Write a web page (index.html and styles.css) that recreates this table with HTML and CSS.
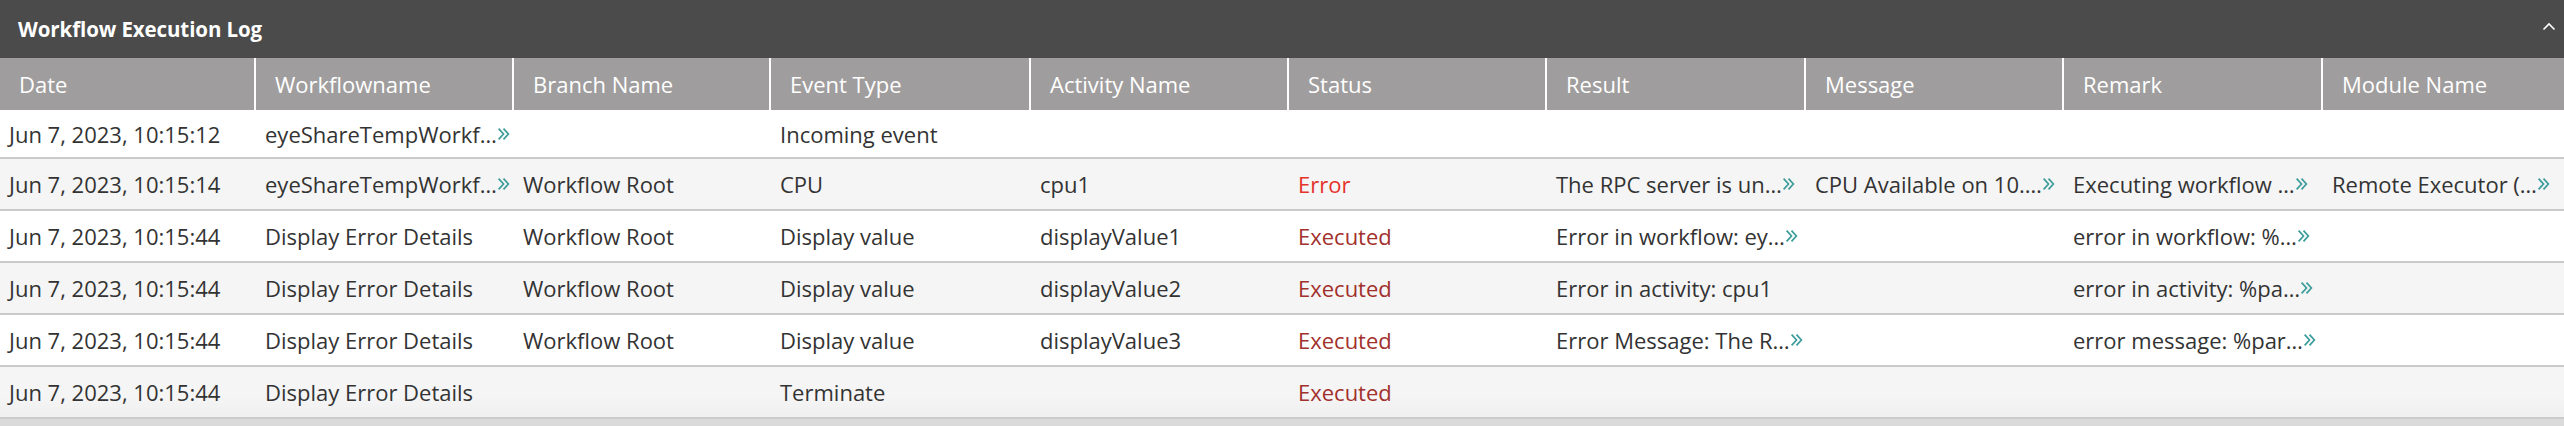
FILE: index.html
```html
<!DOCTYPE html>
<html>
<head>
<meta charset="utf-8">
<link rel="stylesheet" href="styles.css">
</head>
<body>
<div class="panel">
  <div class="titlebar">
    <span class="title">Workflow Execution Log</span>
    <svg class="collapse" width="14" height="9" viewBox="0 0 14 9"><polyline points="1.5,7.5 7,2 12.5,7.5" fill="none" stroke="#fff" stroke-width="1.6"/></svg>
  </div>
  <div class="tablewrap">
    <div class="grid">
      <div class="row head">
        <div class="th">Date</div>
        <div class="th">Workflowname</div>
        <div class="th">Branch Name</div>
        <div class="th">Event Type</div>
        <div class="th">Activity Name</div>
        <div class="th">Status</div>
        <div class="th">Result</div>
        <div class="th">Message</div>
        <div class="th">Remark</div>
        <div class="th">Module Name</div>
      </div>

      <div class="row first">
        <div class="td">Jun 7, 2023, 10:15:12</div>
        <div class="td">eyeShareTempWorkf…<svg class="more" viewBox="0 0 12 14"><polyline points="1.5,2 6,7 1.5,12"/><polyline points="6,2 10.5,7 6,12"/></svg></div>
        <div class="td"></div>
        <div class="td">Incoming event</div>
        <div class="td"></div>
        <div class="td"></div>
        <div class="td"></div>
        <div class="td"></div>
        <div class="td"></div>
        <div class="td"></div>
      </div>

      <div class="row alt">
        <div class="td">Jun 7, 2023, 10:15:14</div>
        <div class="td">eyeShareTempWorkf…<svg class="more" viewBox="0 0 12 14"><polyline points="1.5,2 6,7 1.5,12"/><polyline points="6,2 10.5,7 6,12"/></svg></div>
        <div class="td">Workflow Root</div>
        <div class="td">CPU</div>
        <div class="td">cpu1</div>
        <div class="td error">Error</div>
        <div class="td">The RPC server is un…<svg class="more" viewBox="0 0 12 14"><polyline points="1.5,2 6,7 1.5,12"/><polyline points="6,2 10.5,7 6,12"/></svg></div>
        <div class="td">CPU Available on 10.…<svg class="more" viewBox="0 0 12 14"><polyline points="1.5,2 6,7 1.5,12"/><polyline points="6,2 10.5,7 6,12"/></svg></div>
        <div class="td">Executing workflow … <svg class="more" viewBox="0 0 12 14"><polyline points="1.5,2 6,7 1.5,12"/><polyline points="6,2 10.5,7 6,12"/></svg></div>
        <div class="td">Remote Executor (…<svg class="more" viewBox="0 0 12 14"><polyline points="1.5,2 6,7 1.5,12"/><polyline points="6,2 10.5,7 6,12"/></svg></div>
      </div>

      <div class="row">
        <div class="td">Jun 7, 2023, 10:15:44</div>
        <div class="td">Display Error Details</div>
        <div class="td">Workflow Root</div>
        <div class="td">Display value</div>
        <div class="td">displayValue1</div>
        <div class="td executed">Executed</div>
        <div class="td">Error in workflow: ey…<svg class="more" viewBox="0 0 12 14"><polyline points="1.5,2 6,7 1.5,12"/><polyline points="6,2 10.5,7 6,12"/></svg></div>
        <div class="td"></div>
        <div class="td">error in workflow: %… <svg class="more" viewBox="0 0 12 14"><polyline points="1.5,2 6,7 1.5,12"/><polyline points="6,2 10.5,7 6,12"/></svg></div>
        <div class="td"></div>
      </div>

      <div class="row alt">
        <div class="td">Jun 7, 2023, 10:15:44</div>
        <div class="td">Display Error Details</div>
        <div class="td">Workflow Root</div>
        <div class="td">Display value</div>
        <div class="td">displayValue2</div>
        <div class="td executed">Executed</div>
        <div class="td">Error in activity: cpu1</div>
        <div class="td"></div>
        <div class="td">error in activity: %pa…<svg class="more" viewBox="0 0 12 14"><polyline points="1.5,2 6,7 1.5,12"/><polyline points="6,2 10.5,7 6,12"/></svg></div>
        <div class="td"></div>
      </div>

      <div class="row">
        <div class="td">Jun 7, 2023, 10:15:44</div>
        <div class="td">Display Error Details</div>
        <div class="td">Workflow Root</div>
        <div class="td">Display value</div>
        <div class="td">displayValue3</div>
        <div class="td executed">Executed</div>
        <div class="td">Error Message: The R…<svg class="more" viewBox="0 0 12 14"><polyline points="1.5,2 6,7 1.5,12"/><polyline points="6,2 10.5,7 6,12"/></svg></div>
        <div class="td"></div>
        <div class="td">error message: %par…<svg class="more" viewBox="0 0 12 14"><polyline points="1.5,2 6,7 1.5,12"/><polyline points="6,2 10.5,7 6,12"/></svg></div>
        <div class="td"></div>
      </div>

      <div class="row alt last">
        <div class="td">Jun 7, 2023, 10:15:44</div>
        <div class="td">Display Error Details</div>
        <div class="td"></div>
        <div class="td">Terminate</div>
        <div class="td"></div>
        <div class="td executed">Executed</div>
        <div class="td"></div>
        <div class="td"></div>
        <div class="td"></div>
        <div class="td"></div>
      </div>
    </div>
  </div>
  <div class="hscroll"></div>
</div>
</body>
</html>
```

FILE: styles.css
```css
html, body {
  margin: 0;
  padding: 0;
  background: #ffffff;
}

body {
  font-family: "Open Sans", "Noto Sans", "Liberation Sans", sans-serif;
  color: #333333;
  overflow: hidden;
}

.panel {
  width: 2564px;
  height: 426px;
  display: flex;
  flex-direction: column;
  overflow: hidden;
}

.titlebar {
  height: 58px;
  background: #4b4b4b;
  display: flex;
  align-items: center;
  justify-content: space-between;
  padding: 0 8px 0 18px;
  flex-shrink: 0;
}

.title {
  color: #ffffff;
  font-weight: 700;
  font-size: 20.5px;
  letter-spacing: -0.1px;
}

.collapse {
  display: block;
  margin-top: -6px;
}

.tablewrap {
  overflow: hidden;
  flex-shrink: 0;
}

.grid {
  width: 2583px;
}

.row {
  display: grid;
  grid-template-columns: 256px 258px 257px 260px 258px 258px 259px 258px 259px 260px;
  height: 50px;
  border-bottom: 2px solid #cbcbcb;
  background: #ffffff;
}

.row.alt {
  background: #f5f5f5;
}

.row.first {
  height: 47px;
}

.row.last {
  background: linear-gradient(#f5f5f5 60%, #efefef);
}

.row.head {
  height: 52px;
  border-bottom: none;
  background: #9f9d9d;
}

.th {
  color: #ffffff;
  font-size: 22px;
  display: flex;
  align-items: center;
  padding-left: 19px;
  border-right: 2px solid #ffffff;
  white-space: nowrap;
  overflow: hidden;
}

.th:last-child {
  border-right: none;
}

.td {
  font-size: 22px;
  display: flex;
  align-items: center;
  padding-left: 9px;
  white-space: nowrap;
  overflow: hidden;
}

.td.error {
  color: #e5322b;
}

.td.executed {
  color: #a2302c;
}

.more {
  width: 13px;
  height: 16px;
  flex-shrink: 0;
  margin-left: 0;
  fill: none;
  stroke: #3d9d9b;
  stroke-width: 1.6;
}

.hscroll {
  height: 7px;
  background: #dadada;
  flex-shrink: 0;
}
```
